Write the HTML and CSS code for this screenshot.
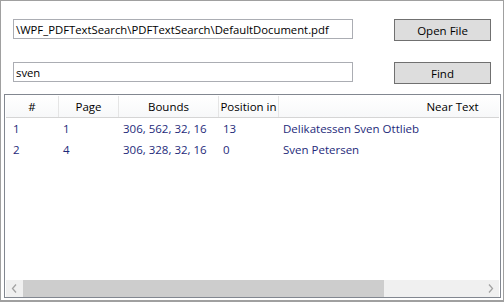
FILE: index.html
```html
<!DOCTYPE html>
<html lang="en">
<head>
  <meta charset="UTF-8">
  <meta name="viewport" content="width=device-width, initial-scale=1.0">
  <title>PDF Text Search</title>
  <link rel="stylesheet" href="styles.css">
</head>
<body>
  <div class="window">
    <div class="form-row">
      <div class="textbox"><span>\WPF_PDFTextSearch\PDFTextSearch\DefaultDocument.pdf</span></div>
      <button class="btn">Open File</button>
    </div>

    <div class="form-row second">
      <div class="textbox"><span>sven</span></div>
      <button class="btn">Find</button>
    </div>

    <div class="listview">
      <div class="list-scroll">
        <div class="grid-header">
          <div class="col col-num">#</div>
          <div class="col col-page">Page</div>
          <div class="col col-bounds">Bounds</div>
          <div class="col col-pos">Position in</div>
          <div class="col col-near">Near Text</div>
        </div>
        <div class="grid-row">
          <div class="col col-num">1</div>
          <div class="col col-page">1</div>
          <div class="col col-bounds">306, 562, 32, 16</div>
          <div class="col col-pos">13</div>
          <div class="col col-near">Delikatessen Sven Ottlieb</div>
        </div>
        <div class="grid-row">
          <div class="col col-num">2</div>
          <div class="col col-page">4</div>
          <div class="col col-bounds">306, 328, 32, 16</div>
          <div class="col col-pos">0</div>
          <div class="col col-near">Sven Petersen</div>
        </div>
      </div>

      <div class="hscroll">
        <div class="arrow">
          <svg width="17" height="17" viewBox="0 0 17 17"><path d="M10 4.5 L6.5 8.5 L10 12.5" fill="none" stroke="#a3a3a3" stroke-width="1.3"/></svg>
        </div>
        <div class="track"><div class="thumb"></div></div>
        <div class="arrow">
          <svg width="17" height="17" viewBox="0 0 17 17"><path d="M7 4.5 L10.5 8.5 L7 12.5" fill="none" stroke="#a3a3a3" stroke-width="1.3"/></svg>
        </div>
      </div>
    </div>
  </div>
</body>
</html>
```

FILE: styles.css
```css
* {
  box-sizing: border-box;
}

body {
  margin: 0;
  font-family: 'Open Sans', 'Noto Sans', sans-serif;
  font-size: 11.5px;
  background: white;
}

.window {
  width: 504px;
  height: 302px;
  border: 1px solid #a0a0a0;
  border-bottom-width: 2px;
  padding: 18px 0 2px 3px;
  display: flex;
  flex-direction: column;
  background: white;
  overflow: hidden;
}

.form-row {
  display: flex;
  align-items: flex-start;
  margin-left: 9px;
  height: 22px;
}

.form-row.second {
  margin-top: 21px;
}

.textbox {
  width: 340px;
  height: 20px;
  border: 1px solid #abadb3;
  padding: 1px 2px 0;
  font-size: 11.3px;
  line-height: 17px;
  color: black;
  white-space: nowrap;
  overflow: hidden;
}

.btn {
  width: 97px;
  height: 22px;
  margin-left: 41px;
  border: 1px solid #707070;
  background: #dddddd;
  font-family: inherit;
  font-size: 11.5px;
  color: black;
  padding: 0;
}

.listview {
  margin-top: 10px;
  width: 497px;
  height: 204px;
  border: 1px solid #828790;
  padding: 1px 1px 0 1px;
  display: flex;
  flex-direction: column;
}

.list-scroll {
  flex: 1;
  overflow: hidden;
}

.grid-header,
.grid-row {
  display: flex;
  width: 629px;
}

.grid-header {
  height: 22px;
  background: linear-gradient(#ffffff, #f7f8f9);
  border-bottom: 1px solid #d5d5d5;
  color: black;
}

.grid-header .col {
  text-align: center;
  border-right: 1px solid #e5e5e5;
  line-height: 21px;
}

.grid-row {
  height: 21px;
  line-height: 21px;
  color: #1e2a7a;
}

.col {
  white-space: nowrap;
  overflow: hidden;
  padding-left: 4px;
}

.grid-header .col {
  padding-left: 0;
}

.col-num {
  width: 53px;
}

.grid-row .col-num {
  padding-left: 7px;
}

.col-page {
  width: 60px;
}

.col-bounds {
  width: 100px;
}

.col-pos {
  width: 60px;
}

.col-near {
  width: 348px;
}

.hscroll {
  height: 17px;
  display: flex;
  background: #f0f0f0;
}

.arrow {
  width: 17px;
  height: 17px;
}

.arrow svg {
  display: block;
}

.track {
  flex: 1;
}

.thumb {
  width: 361px;
  height: 17px;
  background: #cdcdcd;
}
```
